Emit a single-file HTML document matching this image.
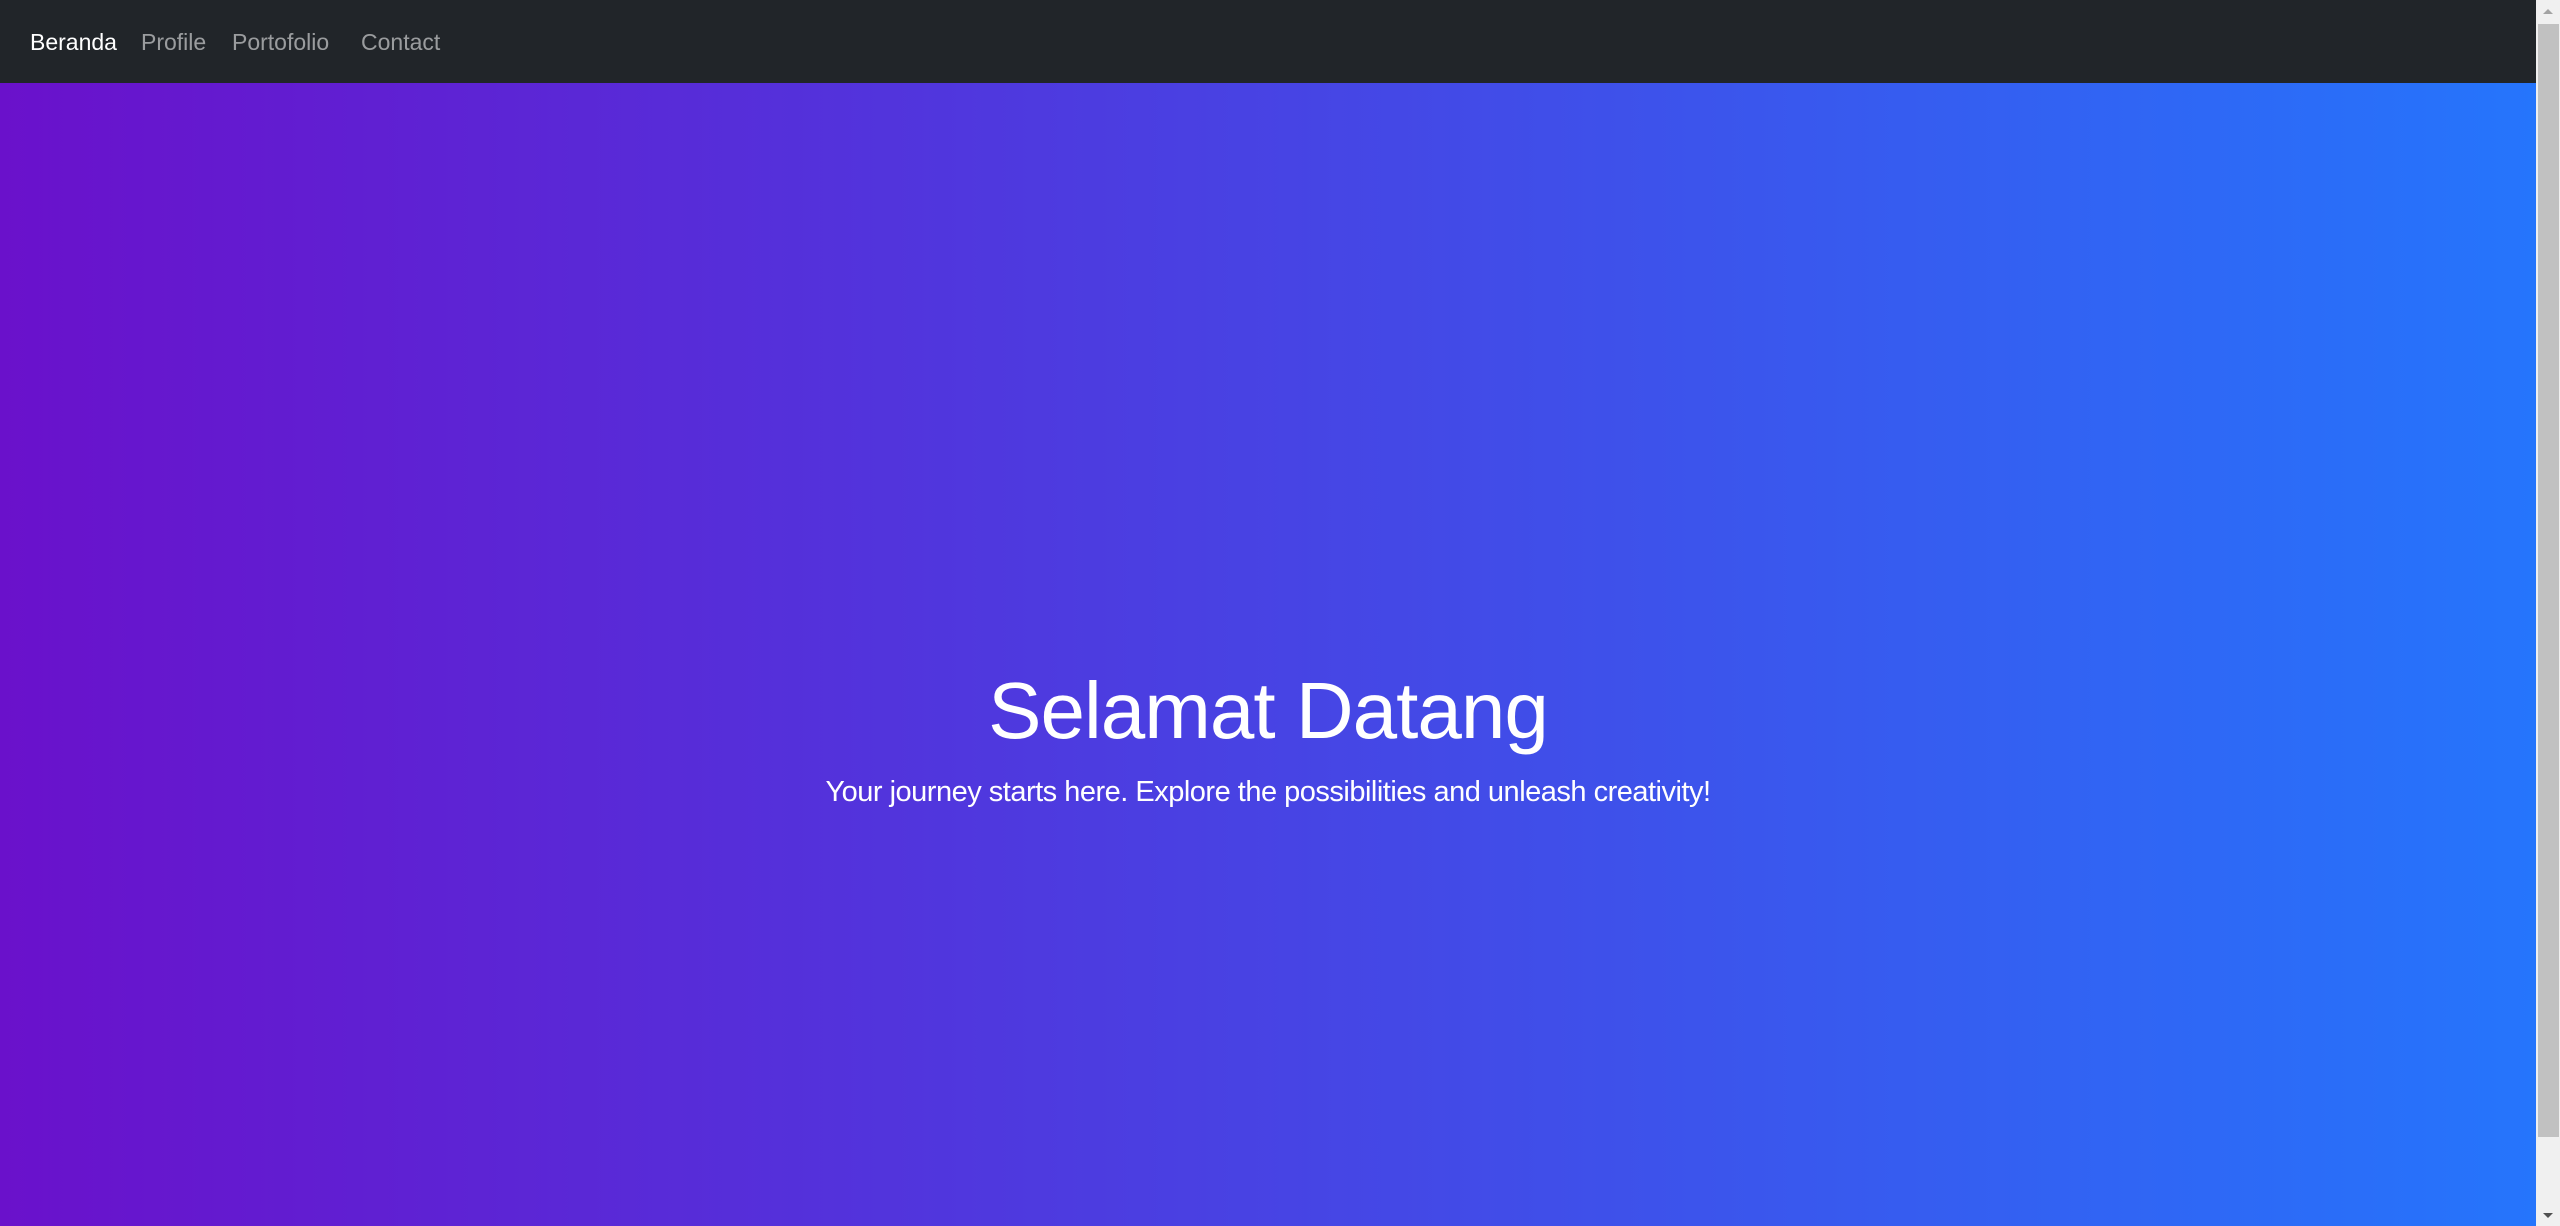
<!DOCTYPE html>
<html><head><meta charset="utf-8"><style>
html,body{margin:0;padding:0;width:2560px;height:1226px;overflow:hidden;font-family:"Segoe UI","Liberation Sans",sans-serif;}
.nav{position:absolute;left:0;top:0;width:2536px;height:83px;background:#212529;}
.nav a{position:absolute;top:25px;font-size:23px;line-height:34px;color:rgba(255,255,255,.55);text-decoration:none;white-space:nowrap;}
.hero{position:absolute;left:0;top:83px;width:2536px;height:1143px;background:linear-gradient(to right,#6a11cb,#2575fc);color:#fff;text-align:center;}
h1{position:absolute;left:0;right:0;top:578px;margin:0;font-weight:300;font-size:80px;line-height:100px;letter-spacing:-1px;}
p{position:absolute;left:0;right:0;top:689px;margin:0;font-weight:300;font-size:29px;line-height:40px;letter-spacing:-0.5px;}
.sb{position:absolute;left:2536px;top:0;width:24px;height:1226px;background:#f0f0f0;}
.th{position:absolute;left:2px;top:24px;width:21px;height:1113px;background:#c1c1c1;}
.up,.dn{position:absolute;left:7px;width:0;height:0;border-left:5px solid transparent;border-right:5px solid transparent;}
.up{top:9px;border-bottom:5px solid #a3a3a3;}
.dn{top:1213px;border-top:5px solid #505050;}
</style></head><body>
<div class="nav">
<a style="left:30px;color:#fff">Beranda</a>
<a style="left:141px">Profile</a>
<a style="left:232px">Portofolio</a>
<a style="left:361px">Contact</a>
</div>
<div class="hero">
<h1>Selamat Datang</h1>
<p>Your journey starts here. Explore the possibilities and unleash creativity!</p>
</div>
<div class="sb"><div class="up"></div><div class="th"></div><div class="dn"></div></div>
</body></html>
